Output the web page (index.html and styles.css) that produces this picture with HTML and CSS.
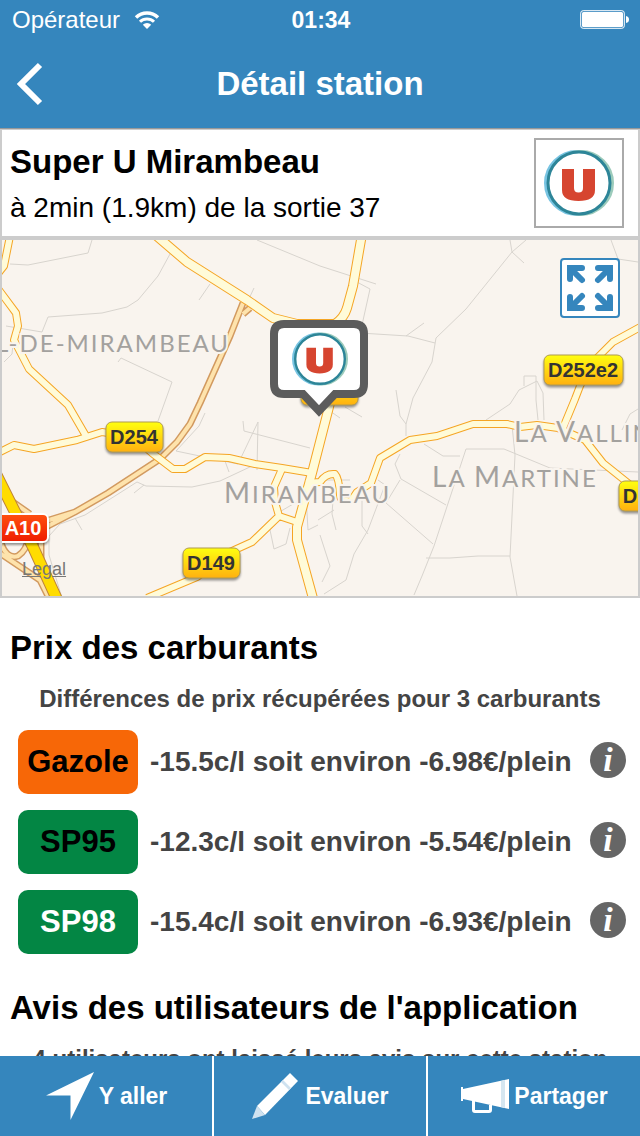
FILE: index.html
```
<!DOCTYPE html>
<html lang="fr">
<head>
    <meta charset="UTF-8">
    <meta name="viewport" content="width=device-width, initial-scale=1.0">
    <title>Détail station</title>
    <link rel="stylesheet" href="styles.css">
</head>
<body>

    <!-- Shared station logo -->
    <svg class="defs" aria-hidden="true">
        <symbol id="logo-u" viewBox="0 0 70 70">
            <circle cx="33" cy="35" r="31" fill="none" stroke="#78c4e2" stroke-width="4"/>
            <circle cx="37" cy="35" r="31" fill="none" stroke="#9ccbbb" stroke-width="4"/>
            <circle cx="35" cy="35" r="31" fill="#fff" stroke="#2d8598" stroke-width="3"/>
            <path d="M18 21H51V42Q51 53 34.500 53Q18 53 18 42Z" fill="#d64530"/>
            <path d="M30 20H39V40Q39 44.500 34.500 44.500Q30 44.500 30 40Z" fill="#fff"/>
        </symbol>
    </svg>

    <div class="app">
        <header class="header">
            <div class="status">
                <span class="operator">Opérateur
                    <svg width="26" height="20" viewBox="0 0 26 20" aria-hidden="true">
                        <path d="M2 7.500A16 16 0 0 1 24 7.500" fill="none" stroke="#fff" stroke-width="3.500"/>
                        <path d="M6 11.800A10 10 0 0 1 20 11.800" fill="none" stroke="#fff" stroke-width="3"/>
                        <path d="M8.800 14.800A6 6 0 0 1 17.200 14.800L13 19Z" fill="#fff"/>
                    </svg>
                </span>
                <span class="time">01:34</span>
                <span class="battery">
                    <svg width="50" height="20" viewBox="0 0 50 20" aria-hidden="true">
                        <rect x="0.700" y="0.700" width="43.600" height="17.600" rx="2.500" fill="none" stroke="#fff" stroke-width="1"/>
                        <rect x="2" y="2" width="41" height="15" rx="1.500" fill="#fff"/>
                        <path d="M46 6Q49 6.500 49 9.500T46 13Z" fill="#fff"/>
                    </svg>
                </span>
            </div>
            <div class="nav">
                <button class="back" aria-label="Retour">
                    <svg width="28" height="44" viewBox="0 0 28 44" aria-hidden="true">
                        <path d="M25 3L6 22L25 41" fill="none" stroke="#fff" stroke-width="6"/>
                    </svg>
                </button>
                <h1>Détail station</h1>
            </div>
        </header>

        <main>
            <!-- Station -->
            <div class="station">
                <div>
                    <h2>Super U Mirambeau</h2>
                    <p>à 2min (1.9km) de la sortie 37</p>
                </div>
                <div class="station-logo">
                    <svg width="70" height="70"><use href="#logo-u"/></svg>
                </div>
            </div>

            <!-- Map -->
            <div class="map">
                <svg class="map-svg" viewBox="2 240 636 356" preserveAspectRatio="xMidYMid slice">
                    <defs>
                        <linearGradient id="yellow" x1="0" y1="0" x2="0" y2="1">
                            <stop offset="0" stop-color="#ffff10"/>
                            <stop offset="1" stop-color="#ffb010"/>
                        </linearGradient>
                        <linearGradient id="red" x1="0" y1="0" x2="0" y2="1">
                            <stop offset="0" stop-color="#ff5010"/>
                            <stop offset="1" stop-color="#ee1c00"/>
                        </linearGradient>
                        <path id="roads-small" d="M10 236L4 266L-4 276M-4 286L16 313L18 326L14 340L29 369L68 405L86 436M-2 453L14 445L34 449L77 440L102 432L133 437L152 453L173 469H185L205 457L229 458L255 464L282 468L312 473M282 469L274 487L275 502L279 516L297 522M279 516L252 542L230 552L197 577L147 598M306 483L320 482Q326 473 335 474Q339 478 340 495Q340 502 351 501L357 492L371 483L380 458L410 440L437 436L473 424H507L520 427L537 425L558 428L585 440L603 463L628 483L644 496M642 326L613 342L590 365L580 386L575 399L563 428"/>
                        <path id="roads-main" d="M152 232L187 262L247 300L273 318L297 324H335Q344 318 347 308L353 286L362 234M338 322L330 403L312 473L297 527L297 540L314 602"/>
                        <path id="roads-link" d="M243 303L230 336L200 403L190 424L177 442L160 459L108 493L75 512L46 521M46 527L75 512M10 500L30 514M41 540V560M0 540Q6 560 18 556Q27 550 28 538M-2 552L40 580L50 600M243 314L250 308"/>
                        <path id="motorway" d="M-5 472L13 508L33 547L60 606"/>
                    </defs>

                    <rect x="2" y="240" width="636" height="356" fill="#f9f4ee"/>

                    <!-- Paths and lanes -->
                    <path class="lane" d="M92 240L88 253L28 265L10 264M170 254L158 276L138 300L127 307L102 313L48 317L42 332L6 326M210 284L199 300M254 288L246 305M118 362L121 358L172 382L158 421M257 240L320 266L376 284M205 413L199 426L176 451L238 464L258 422L257 470M243 421L244 431L310 448M137 482L146 486L192 487L220 481L252 466M137 482L85 515L60 524L49 536L49 555L62 598M75 518L82 530M144 485L134 493M225 461L229 472M4 362L12 354L13 344"/>
                    <path class="lane" d="M510 240L512 252L524 263M526 240L512 252L466 309L436 338L432 362L413 398L406 424V436M355 281L370 289L362 325M360 333L408 336L435 343M406 336L424 323M396 390L400 416L406 424M611 240L618 259L638 262M486 420L510 404L519 390L537 381L543 393L544 420M524 386V376H536V400L538 420M638 409L630 414L622 430M414 595L422 576L434 546L466 449L504 449L550 468L638 472M512 425L515 455L510 557L517 596M426 558H450L478 556H510M395 464L401 479L446 505M395 464L400 454M386 503L433 544M378 480L385 485L368 530L354 554L346 580L324 594M362 496V526L368 534M400 480L386 503M424 444L443 456H460M270 530L274 549L286 544L290 528M306 495L308 530L318 525M276 514L300 500M314 480H350M320 535L330 566L322 582M333 500L332 514L336 530M334 510L318 520M320 404L340 418M345 407L362 417"/>

                    <!-- Roads, drawn as an outline and a fill -->
                    <use href="#roads-link" class="link-edge"/>
                    <use href="#roads-link" class="link-fill"/>
                    <use href="#roads-small" class="small-edge"/>
                    <use href="#roads-main" class="main-edge"/>
                    <use href="#roads-small" class="small-fill"/>
                    <use href="#roads-main" class="main-fill"/>
                    <use href="#motorway" class="motorway-edge"/>
                    <use href="#motorway" class="motorway-fill"/>

                    <!-- Places -->
                    <g class="place">
                        <text x="-4" y="352">L-DE-MIRAMBEAU</text>
                        <text x="224" y="503"><tspan class="initial">M</tspan>IRAMBEAU</text>
                        <text x="432" y="487"><tspan class="initial">L</tspan>A <tspan class="initial">M</tspan>ARTINE</text>
                        <text x="514" y="442"><tspan class="initial">L</tspan>A <tspan class="initial">V</tspan>ALLIN</text>
                    </g>

                    <!-- Road numbers -->
                    <g class="shield">
                        <rect x="106" y="422" width="57" height="30" rx="6"/>
                        <rect x="183" y="548" width="57" height="30" rx="6"/>
                        <rect x="544" y="355" width="79" height="30" rx="6"/>
                        <rect x="619" y="481" width="57" height="30" rx="6"/>
                        <rect x="301" y="375" width="57" height="30" rx="6"/>
                        <text x="134" y="444">D254</text>
                        <text x="211" y="570">D149</text>
                        <text x="583" y="377">D252e2</text>
                        <text x="630" y="503">D</text>
                    </g>
                    <g class="shield shield-red">
                        <rect x="-3" y="514" width="51" height="28" rx="5"/>
                        <text x="23" y="535">A10</text>
                    </g>

                    <!-- Station pin -->
                    <path d="M284 324H354Q364 324 364 334V384Q364 394 354 394H335L319 411L303 394H284Q274 394 274 384V334Q274 324 284 324Z" fill="#fff" stroke="#5c5c5c" stroke-width="8"/>
                    <use href="#logo-u" x="292" y="331" width="56" height="56"/>
                </svg>
                <a class="legal" href="#">Legal</a>
                <button class="expand" aria-label="Agrandir la carte">
                    <svg width="48" height="48" viewBox="0 0 48 48" aria-hidden="true">
                        <path id="arrow" d="M4 15V4H16M5 5L16 16" fill="none" stroke="#3586bd" stroke-width="6" stroke-linecap="round"/>
                        <use href="#arrow" transform="matrix(-1 0 0 1 48 0)"/>
                        <use href="#arrow" transform="matrix(1 0 0 -1 0 48)"/>
                        <use href="#arrow" transform="matrix(-1 0 0 -1 48 48)"/>
                    </svg>
                </button>
            </div>

            <!-- Fuel prices -->
            <section>
                <h2>Prix des carburants</h2>
                <p class="note">Différences de prix récupérées pour 3 carburants</p>
                <ul class="fuels">
                    <li>
                        <span class="fuel gazole">Gazole</span>
                        <span class="price">-15.5c/l soit environ -6.98€/plein</span>
                        <button class="info" aria-label="Infos Gazole">i</button>
                    </li>
                    <li>
                        <span class="fuel sp95">SP95</span>
                        <span class="price">-12.3c/l soit environ -5.54€/plein</span>
                        <button class="info" aria-label="Infos SP95">i</button>
                    </li>
                    <li>
                        <span class="fuel sp98">SP98</span>
                        <span class="price">-15.4c/l soit environ -6.93€/plein</span>
                        <button class="info" aria-label="Infos SP98">i</button>
                    </li>
                </ul>
            </section>

            <!-- Reviews -->
            <section>
                <h2>Avis des utilisateurs de l'application</h2>
                <p class="note">4 utilisateurs ont laissé leurs avis sur cette station</p>
            </section>
        </main>

        <footer class="actions">
            <button>
                <svg width="50" height="50" viewBox="0 0 50 50" aria-hidden="true">
                    <path d="M49 1L1 24.500H25.500V49Z" fill="#fff"/>
                </svg>
                Y aller
            </button>
            <button>
                <svg width="50" height="50" viewBox="0 0 50 50" aria-hidden="true">
                    <path d="M39 2L47 10L14 44L6 35Z" fill="#fff"/>
                    <path d="M6 35L14 44L1 48Z" fill="#cfe2f0"/>
                    <path d="M30 11L38 19L40 17L32 9Z" fill="#cfe2f0"/>
                </svg>
                Evaluer
            </button>
            <button>
                <svg width="50" height="50" viewBox="0 0 50 50" aria-hidden="true">
                    <path d="M1 16H3V18L49 8V38L3 28V30H1Z" fill="#fff"/>
                    <path d="M41 10L45 9V37L41 36Z" fill="#d5e6f0"/>
                    <path d="M13.500 30V39Q13.500 40.500 15 40.500H29Q30.500 40.500 30.500 39V34" fill="none" stroke="#fff" stroke-width="3"/>
                </svg>
                Partager
            </button>
        </footer>
    </div>

</body>
</html>
```
FILE: styles.css
```
* {
    box-sizing: border-box;
}

body {
    margin: 0;
    font-family: "Liberation Sans", Arial, sans-serif;
    background: white;
    color: black;
}

h1, h2, p, ul {
    margin: 0;
    padding: 0;
}

button {
    padding: 0;
    border: none;
    background: none;
    color: white;
    font-family: inherit;
    cursor: pointer;
}

svg {
    display: block;
}

.defs {
    position: absolute;
    width: 0;
    height: 0;
}

.app {
    display: flex;
    flex-direction: column;
    height: 100vh;
}

/* Header */
.header {
    background: #3586bd;
    color: white;
    border-bottom: 1px solid #999;
}

.status {
    display: grid;
    grid-template-columns: 1fr auto 1fr;
    align-items: center;
    height: 40px;
    padding: 0 10px 0 12px;
    font-size: 24px;
}

.operator {
    display: flex;
    align-items: center;
    gap: 14px;
}

.time {
    font-size: 23px;
    font-weight: bold;
}

.battery {
    justify-self: end;
}

.nav {
    display: grid;
    grid-template-columns: 60px 1fr 60px;
    align-items: center;
    height: 88px;
}

.back {
    padding-left: 15px;
}

h1 {
    font-size: 33px;
    text-align: center;
}

h2 {
    font-size: 33px;
    line-height: 40px;
}

/* Content */
main {
    flex: 1;
    min-height: 0;
    overflow-y: auto;
    scrollbar-width: none;
}

.station {
    display: flex;
    justify-content: space-between;
    align-items: center;
    padding: 8px 14px 8px 8px;
    border: 2px solid #ccc;
    border-top: 1px solid #ccc;
}

.station p {
    margin-top: 10px;
    font-size: 28px;
    line-height: 32px;
}

.station-logo {
    padding: 8px;
    border: 2px solid #aaa;
}

.map {
    position: relative;
    border: 2px solid #ccc;
}

.map-svg {
    width: 100%;
    height: 356px;
}

.lane,
.map-svg use {
    fill: none;
    stroke-linejoin: round;
}

.lane {
    stroke: #d8d4ce;
    stroke-width: 1px;
}

.link-edge {
    stroke: #d29a60;
    stroke-width: 7px;
}

.link-fill {
    stroke: #fee3ac;
    stroke-width: 4px;
}

.small-edge {
    stroke: #f5a524;
    stroke-width: 8px;
}

.small-fill {
    stroke: #fffbd8;
    stroke-width: 6px;
}

.main-edge {
    stroke: #f5a524;
    stroke-width: 10px;
}

.main-fill {
    stroke: #fffbd8;
    stroke-width: 8px;
}

.motorway-edge {
    stroke: #c08438;
    stroke-width: 12px;
}

.motorway-fill {
    stroke: #ffdc00;
    stroke-width: 10px;
}

.place {
    font-family: Lato, sans-serif;
    font-size: 24px;
    letter-spacing: 2px;
    fill: #a3a19e;
    stroke: #f9f4ee;
    stroke-width: 4px;
    paint-order: stroke;
}

.initial {
    font-size: 28px;
}

.shield rect {
    fill: url(#yellow);
    stroke: #b09a50;
    stroke-width: 1px;
    filter: drop-shadow(0 2px 1px rgba(0, 0, 0, 0.4));
}

.shield text {
    font-size: 20px;
    font-weight: bold;
    text-anchor: middle;
    fill: #333;
}

.shield-red rect {
    fill: url(#red);
    stroke: white;
    stroke-width: 2px;
}

.shield-red text {
    fill: white;
}

.legal {
    position: absolute;
    left: 20px;
    bottom: 16px;
    font-size: 18px;
    color: #777;
}

.expand {
    position: absolute;
    top: 18px;
    right: 18px;
    padding: 4px;
    border: 2px solid #3586bd;
    border-radius: 4px;
    background: white;
}

section {
    padding: 30px 10px 4px;
}

.note {
    margin: 16px 0;
    font-size: 24px;
    font-weight: bold;
    line-height: 30px;
    text-align: center;
    white-space: nowrap;
    color: #444;
}

.fuels {
    display: grid;
    gap: 16px;
    padding: 0 4px 0 8px;
    list-style: none;
}

.fuels li {
    display: flex;
    align-items: center;
    gap: 12px;
}

.fuel {
    width: 120px;
    border-radius: 10px;
    font-size: 31px;
    font-weight: bold;
    line-height: 64px;
    text-align: center;
}

.gazole {
    background: #f76707;
}

.sp95 {
    background: #038644;
}

.sp98 {
    background: #038644;
    color: white;
}

.price {
    flex: 1;
    font-size: 28px;
    font-weight: bold;
    white-space: nowrap;
    color: #444;
}

.info {
    width: 36px;
    height: 36px;
    margin-bottom: 4px;
    border-radius: 50%;
    background: #666;
    font-family: "Liberation Serif", serif;
    font-size: 34px;
    font-style: italic;
    font-weight: bold;
    line-height: 34px;
}

/* Bottom bar */
.actions {
    display: flex;
    height: 80px;
    background: #3586bd;
}

.actions button {
    display: flex;
    flex: 1;
    align-items: center;
    justify-content: center;
    gap: 4px;
    font-size: 23px;
    font-weight: bold;
}

.actions button + button {
    border-left: 2px solid white;
}
```
